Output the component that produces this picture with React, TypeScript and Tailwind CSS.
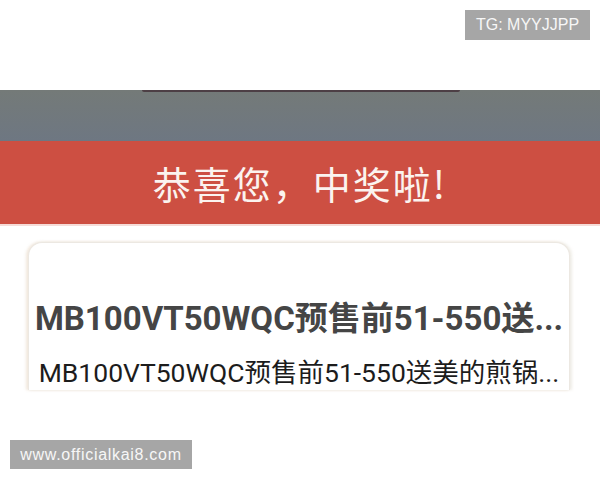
import React from "react";

export default function App() {
  return (
    <div className="relative w-[600px] h-[480px] overflow-hidden bg-white">
      <div className="h-[90px] bg-white" />
      <div className="h-[51px] bg-gradient-to-b from-[#747a78] to-[#6e7782]">
        <div className="ml-[142px] w-[318px] h-[2px] rounded-b-full bg-[#4d3f45]" />
      </div>
      <div className="h-[83px] bg-[#cd4f42] flex items-center justify-center">
        <span
          className="text-[38px] leading-none tracking-[2px] text-[#fbf3ef]"
          style={{ fontFamily: '"Noto Sans CJK SC", sans-serif' }}
        >
          恭喜您，中奖啦!
        </span>
      </div>
      <div className="h-[2px] bg-[#f6dcd8]" />
      <div className="pt-[16px] pl-[28px]">
        <div
          className="w-[542px] h-[148px] overflow-hidden rounded-t-[14px] border border-b-0 border-[#ece8e2] shadow-[-2px_0_3px_rgba(225,205,180,0.45),2px_0_3px_rgba(215,210,195,0.4)] bg-white flex flex-col items-center"
          style={{ fontFamily: 'Roboto, "Noto Sans CJK SC", sans-serif' }}
        >
          <div className="pt-[57px] text-[33px] leading-[38px] font-bold text-[#454545] whitespace-nowrap">
            MB100VT50WQC预售前51-550送...
          </div>
          <div className="pt-[19px] text-[26.5px] leading-[32px] text-[#1c1c1c] whitespace-nowrap">
            MB100VT50WQC预售前51-550送美的煎锅...
          </div>
        </div>
      </div>

      <div
        className="absolute left-[465px] top-[10px] w-[125px] h-[30px] bg-[#a6a6a6] flex items-center justify-center text-[16px] text-[#f7f7f7]"
        style={{ fontFamily: '"Liberation Sans", Arial, sans-serif' }}
      >
        TG: MYYJJPP
      </div>
      <div
        className="absolute left-[10px] top-[440px] w-[182px] h-[29px] bg-[#a6a6a6] flex items-center justify-center text-[16px] tracking-[0.7px] text-[#f7f7f7]"
        style={{ fontFamily: '"Liberation Sans", Arial, sans-serif' }}
      >
        www.officialkai8.com
      </div>
    </div>
  );
}
